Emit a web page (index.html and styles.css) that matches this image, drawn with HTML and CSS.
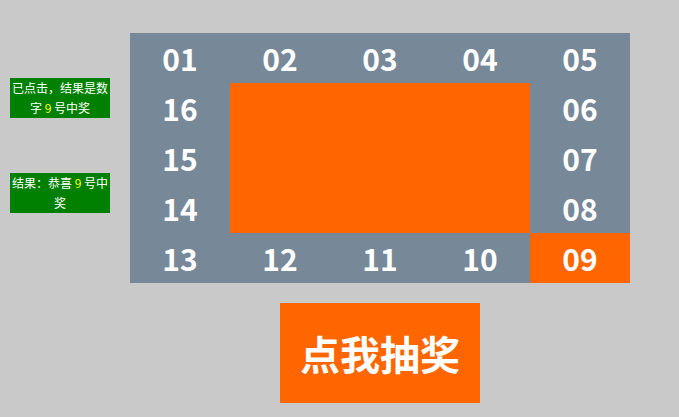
FILE: index.html
```html
<!DOCTYPE html>
<html lang="zh">
<head>
<meta charset="utf-8">
<title>抽奖</title>
<link rel="stylesheet" href="styles.css">
</head>
<body>
<div class="page">
  <div class="side">
    <div class="note">已点击，结果是数字 <span class="hl">9</span> 号中奖</div>
    <div class="note">结果：恭喜 <span class="hl">9</span> 号中奖</div>
  </div>
  <div class="main">
    <div class="board">
      <div class="cell r1 c1">01</div>
      <div class="cell r1 c2">02</div>
      <div class="cell r1 c3">03</div>
      <div class="cell r1 c4">04</div>
      <div class="cell r1 c5">05</div>
      <div class="cell r2 c5">06</div>
      <div class="cell r3 c5">07</div>
      <div class="cell r4 c5">08</div>
      <div class="cell r5 c5 active">09</div>
      <div class="cell r5 c4">10</div>
      <div class="cell r5 c3">11</div>
      <div class="cell r5 c2">12</div>
      <div class="cell r5 c1">13</div>
      <div class="cell r4 c1">14</div>
      <div class="cell r3 c1">15</div>
      <div class="cell r2 c1">16</div>
      <div class="center"></div>
    </div>
    <div class="btn">点我抽奖</div>
  </div>
</div>
</body>
</html>
```
FILE: styles.css
```css
html, body {
  margin: 0;
  padding: 0;
  background: #c9c9c9;
  font-family: "Noto Sans CJK SC", "Noto Sans", sans-serif;
}
.page {
  display: flex;
  align-items: flex-start;
  padding-left: 10px;
  width: 679px;
  height: 417px;
  box-sizing: border-box;
}
.side {
  width: 100px;
  padding-top: 78px;
  display: flex;
  flex-direction: column;
  gap: 55px;
}
.note {
  background: #008000;
  color: #fff;
  font-size: 12px;
  line-height: 20px;
  height: 40px;
  text-align: center;
  overflow: hidden;
}
.hl { color: #ffff00; }
.main {
  margin-left: 20px;
  padding-top: 33px;
  display: flex;
  flex-direction: column;
  align-items: center;
  gap: 20px;
}
.board {
  display: grid;
  grid-template-columns: repeat(5, 100px);
  grid-template-rows: repeat(5, 50px);
  background: #778899;
}
.cell {
  display: flex;
  align-items: center;
  justify-content: center;
  color: #fff;
  font-size: 30px;
  font-weight: bold;
}
.cell.active, .center { background: #ff6600; }
.center { grid-row: 2 / 5; grid-column: 2 / 5; }
.r1 { grid-row: 1; } .r2 { grid-row: 2; } .r3 { grid-row: 3; } .r4 { grid-row: 4; } .r5 { grid-row: 5; }
.c1 { grid-column: 1; } .c2 { grid-column: 2; } .c3 { grid-column: 3; } .c4 { grid-column: 4; } .c5 { grid-column: 5; }
.btn {
  width: 200px;
  height: 100px;
  background: #ff6600;
  color: #fff;
  font-size: 40px;
  font-weight: bold;
  display: flex;
  align-items: center;
  justify-content: center;
}
```
